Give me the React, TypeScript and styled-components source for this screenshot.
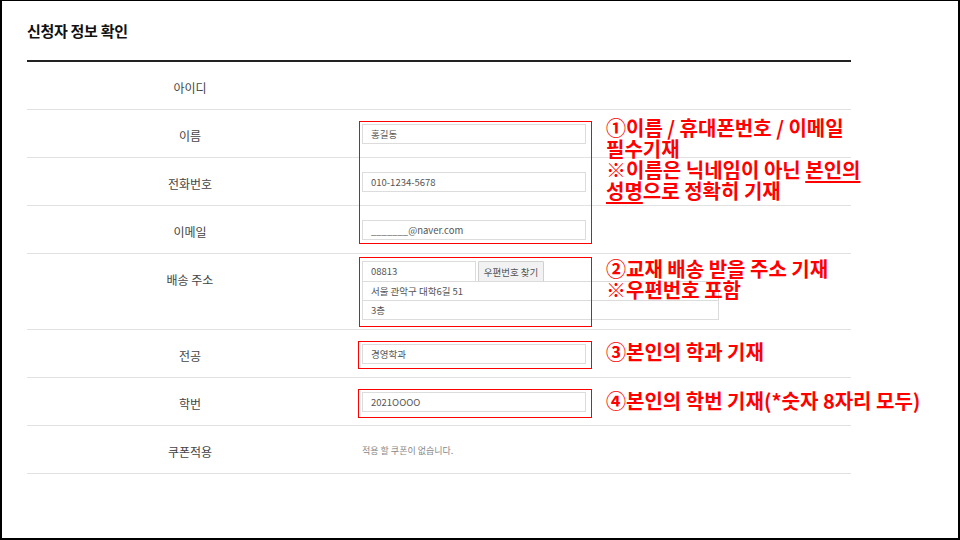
import React from "react";
import styled, { createGlobalStyle } from "styled-components";

const Global = createGlobalStyle`
  html, body { margin: 0; padding: 0; background: #fff; }
  body { font-family: "Noto Sans CJK KR", "Noto Sans", sans-serif; }
  * { box-sizing: border-box; }
`;

const Frame = styled.div`
  width: 960px;
  height: 540px;
  border: 2px solid #000;
  border-top-width: 1px;
  background: #fff;
  padding-left: 25px;
  overflow: hidden;
`;

const Content = styled.div`
  width: 824px;
  position: relative;
`;

const Title = styled.h2`
  margin: 0;
  height: 59px;
  display: flex;
  align-items: center;
  font-size: 15px;
  font-weight: 700;
  color: #111;
  letter-spacing: -0.3px;
`;

const Table = styled.div`
  border-top: 2px solid #222;
  position: relative;
`;

const Row = styled.div<{ $tall?: boolean }>`
  display: flex;
  min-height: ${(p) => (p.$tall ? 76 : 48)}px;
  border-bottom: 1px solid #e2e2e2;
`;

const Label = styled.div`
  width: 326px;
  flex-shrink: 0;
  text-align: center;
  padding-top: 19px;
  font-size: 12px;
  line-height: 14px;
  color: #444;
`;

const Value = styled.div<{ $top?: boolean }>`
  flex: 1;
  padding-left: 9px;
  display: flex;
  flex-direction: column;
  justify-content: ${(p) => (p.$top ? "flex-start" : "center")};
  padding-top: ${(p) => (p.$top ? 7 : 0)}px;
`;

const Field = styled.div<{ $w: number }>`
  width: ${(p) => p.$w}px;
  height: 20px;
  border: 1px solid #dcdcdc;
  background: #fff;
  font-size: 9.5px;
  line-height: 18px;
  padding-left: 8px;
  color: #555;
  white-space: nowrap;
  & + & {
    margin-top: -1px;
  }
`;

const ZipLine = styled.div`
  display: flex;
  gap: 2px;
  height: 21px;
  margin-bottom: -1px;
`;

const ZipField = styled(Field)`
  height: 21px;
  line-height: 19px;
`;

const ZipButton = styled.button`
  width: 66px;
  height: 21px;
  border: 1px solid #d0d0d0;
  background: #f2f2f2;
  color: #555;
  font-family: inherit;
  font-size: 9.5px;
  padding: 0;
  border-radius: 1px;
`;

const Stack = styled.div`
  display: flex;
  flex-direction: column;
`;

const Empty = styled.span`
  font-size: 9px;
  color: #888;
  padding-top: 1px;
`;

const RedBox = styled.div<{ $l: number; $t: number; $w: number; $h: number }>`
  position: absolute;
  left: ${(p) => p.$l}px;
  top: ${(p) => p.$t}px;
  width: ${(p) => p.$w}px;
  height: ${(p) => p.$h}px;
  border: 1px solid #ff0000;
  pointer-events: none;
`;

const Note = styled.div<{ $l: number; $t: number }>`
  position: absolute;
  left: ${(p) => p.$l}px;
  top: ${(p) => p.$t}px;
  color: #ff0000;
  font-weight: 700;
  font-size: 20px;
  line-height: 21px;
  letter-spacing: 0;
  white-space: nowrap;
`;

const U = styled.span`
  text-decoration: underline;
  text-decoration-thickness: 1.5px;
  text-underline-offset: 3px;
`;

const fields = [
  { label: "이름", value: "홍길동" },
  { label: "전화번호", value: "010-1234-5678" },
  { label: "이메일", value: "_______@naver.com" },
];

export default function App() {
  return (
    <>
      <Global />
      <Frame>
        <Content>
          <Title>신청자 정보 확인</Title>
          <Table>
            <Row>
              <Label>아이디</Label>
              <Value />
            </Row>
            {fields.map((f) => (
              <Row key={f.label}>
                <Label>{f.label}</Label>
                <Value>
                  <Field $w={224}>{f.value}</Field>
                </Value>
              </Row>
            ))}
            <Row $tall>
              <Label>배송 주소</Label>
              <Value $top>
                <Stack>
                  <ZipLine>
                    <ZipField $w={114}>08813</ZipField>
                    <ZipButton>우편번호 찾기</ZipButton>
                  </ZipLine>
                  <Field $w={357}>서울 관악구 대학6길 51</Field>
                  <Field $w={357}>3층</Field>
                </Stack>
              </Value>
            </Row>
            <Row>
              <Label>전공</Label>
              <Value>
                <Field $w={224}>경영학과</Field>
              </Value>
            </Row>
            <Row>
              <Label>학번</Label>
              <Value>
                <Field $w={224}>2021OOOO</Field>
              </Value>
            </Row>
            <Row>
              <Label>쿠폰적용</Label>
              <Value>
                <Empty>적용 할 쿠폰이 없습니다.</Empty>
              </Value>
            </Row>

            <RedBox $l={332} $t={59} $w={233} $h={123} />
            <RedBox $l={332} $t={195} $w={233} $h={70} />
            <RedBox $l={331} $t={279} $w={234} $h={28} />
            <RedBox $l={331} $t={327} $w={234} $h={29} />

            <Note $l={579} $t={55}>
              ①이름 / 휴대폰번호 / 이메일
              <br />
              필수기재
              <br />
              ※이름은 닉네임이 아닌 <U>본인의</U>
              <br />
              <U>성명</U>으로 정확히 기재
            </Note>
            <Note $l={579} $t={196}>
              ②교재 배송 받을 주소 기재
              <br />
              ※우편번호 포함
            </Note>
            <Note $l={579} $t={279}>
              ③본인의 학과 기재
            </Note>
            <Note $l={579} $t={328}>
              ④본인의 학번 기재(*숫자 8자리 모두)
            </Note>
          </Table>
        </Content>
      </Frame>
    </>
  );
}
